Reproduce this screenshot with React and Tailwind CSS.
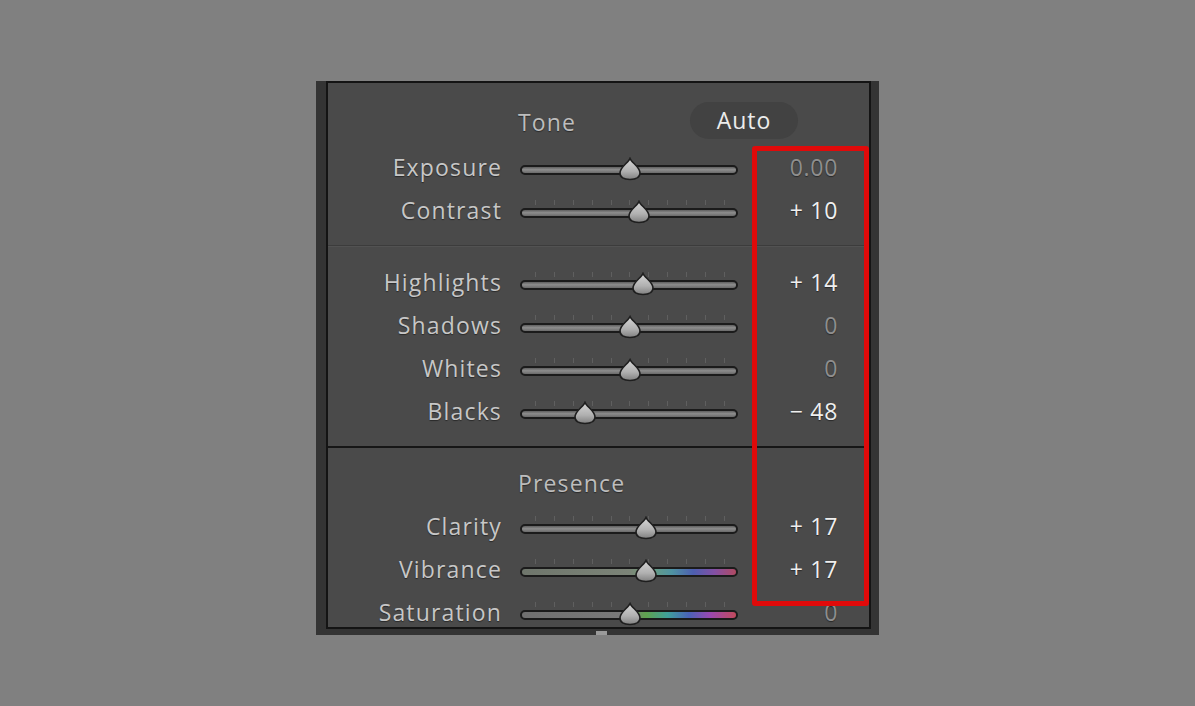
const font = { fontFamily: '"Open Sans", "Noto Sans", sans-serif' };

const TICKS = [0, 1, 2, 3, 4, 5, 6, 7, 8, 9, 10];

const TRACKS = {
  plain: "bg-[linear-gradient(to_bottom,#5f5f5f,#8d8d8d_45%,#6a6a6a)]",
  vibrance:
    "bg-[linear-gradient(to_right,#6f766c_0%,#7c8478_50%,#6f9e78_58%,#4f93a2_70%,#4d5fb0_80%,#8450a4_90%,#b04a62_100%)]",
  saturation:
    "bg-[linear-gradient(to_right,#707070_0%,#7a7a7a_50%,#5fa24e_58%,#3fa09a_68%,#4a62b8_78%,#9a48b0_88%,#c24a5c_100%)]",
};

function Thumb({ left }) {
  return (
    <svg
      className="absolute top-[1px] -ml-[12px]"
      style={{ left }}
      width="24"
      height="24"
      viewBox="0 0 24 24"
    >
      <defs>
        <linearGradient id="thumbFill" x1="0" y1="0" x2="0" y2="1">
          <stop offset="0" stopColor="#d6d6d6" />
          <stop offset="0.6" stopColor="#b0b0b0" />
          <stop offset="1" stopColor="#808080" />
        </linearGradient>
      </defs>
      <path
        d="M12 1.5 C13.5 5.5 22 10 22 16 C22 20.5 18.5 22.5 12 22.5 C5.5 22.5 2 20.5 2 16 C2 10 10.5 5.5 12 1.5 Z"
        fill="url(#thumbFill)"
        stroke="#1e1e1e"
        strokeWidth="1.6"
      />
    </svg>
  );
}

function Slider({ value, ticks = true, kind = "plain" }) {
  const left = 110 + value * 0.94;
  return (
    <div className="relative h-[24px] w-[218px]">
      {ticks && (
        <div className="absolute left-[15px] right-[13px] top-[1px] flex h-[5px] justify-between">
          {TICKS.map((t) => (
            <span key={t} className="h-full w-px bg-[#5f5f5f]" />
          ))}
        </div>
      )}
      <div
        className={`absolute left-0 right-0 top-[9px] h-[10px] rounded-full border-2 border-[#1b1b1b] ${TRACKS[kind]}`}
      />
      <Thumb left={left} />
    </div>
  );
}

function Row({ label, value, display, bright, ticks, kind }) {
  return (
    <div className="flex h-[43px] shrink-0 items-center">
      <div className="w-[174px] text-right text-[23px] tracking-[0.05em] text-[#c7c7c7] [text-shadow:0_1px_1px_rgba(0,0,0,0.45)]">
        {label}
      </div>
      <div className="ml-[18px]">
        <Slider value={value} ticks={ticks} kind={kind} />
      </div>
      <div
        className={`w-[100px] text-right text-[23px] tracking-[0.03em] [text-shadow:0_1px_1px_rgba(0,0,0,0.45)] ${
          bright ? "text-[#efefef]" : "text-[#8e8e8e]"
        }`}
      >
        {display}
      </div>
    </div>
  );
}

function Heading({ children, auto, tall }) {
  return (
    <div
      className={`flex shrink-0 items-center pl-[190px] ${tall ? "h-[46px] pb-[2px]" : "h-[43px]"}`}
    >
      <span className="w-[172px] text-[23px] tracking-[0.05em] text-[#bdbdbd] [text-shadow:0_1px_1px_rgba(0,0,0,0.45)]">
        {children}
      </span>
      {auto && (
        <span className="-mt-[4px] flex h-[37px] w-[108px] items-center justify-center rounded-full bg-[#424242] text-[23px] tracking-[0.04em] text-[#ececec]">
          Auto
        </span>
      )}
    </div>
  );
}

export default function App() {
  return (
    <div
      className="relative h-[706px] w-[1195px] overflow-hidden bg-[#808080] pl-[316px] pt-[81px]"
      style={font}
    >
      <div className="flex h-[554px] w-[563px] flex-col bg-[#343434] pl-[10px] pr-[8px]">
        <div className="flex h-[548px] flex-col overflow-hidden border-2 border-[#141414] bg-[#4a4a4a]">
          <div className="flex shrink-0 flex-col pb-[13px] pt-[17px]">
            <Heading auto tall>
              Tone
            </Heading>
            <Row label="Exposure" value={0} display="0.00" ticks={false} />
            <Row label="Contrast" value={10} display="+ 10" bright />
          </div>
          <div className="h-px shrink-0 bg-[#3c3c3c]" />
          <div className="h-px shrink-0 bg-[#525252]" />
          <div className="flex shrink-0 flex-col pb-[13px] pt-[14px]">
            <Row label="Highlights" value={14} display="+ 14" bright />
            <Row label="Shadows" value={0} display="0" />
            <Row label="Whites" value={0} display="0" />
            <Row label="Blacks" value={-48} display="− 48" bright />
          </div>
          <div className="h-[2px] shrink-0 bg-[#161616]" />
          <div className="flex shrink-0 flex-col pt-[14px]">
            <Heading>Presence</Heading>
            <Row label="Clarity" value={17} display="+ 17" bright />
            <Row label="Vibrance" value={17} display="+ 17" bright kind="vibrance" />
            <Row label="Saturation" value={0} display="0" kind="saturation" />
          </div>
        </div>
        <div className="h-[6px] shrink-0">
          <div className="ml-[270px] mt-[2px] h-[4px] w-[11px] bg-[#9a9a9a]" />
        </div>
      </div>
      <div className="absolute left-[752px] top-[146px] h-[460px] w-[117px] rounded-[3px] border-[5px] border-[#e00a0a]" />
    </div>
  );
}
